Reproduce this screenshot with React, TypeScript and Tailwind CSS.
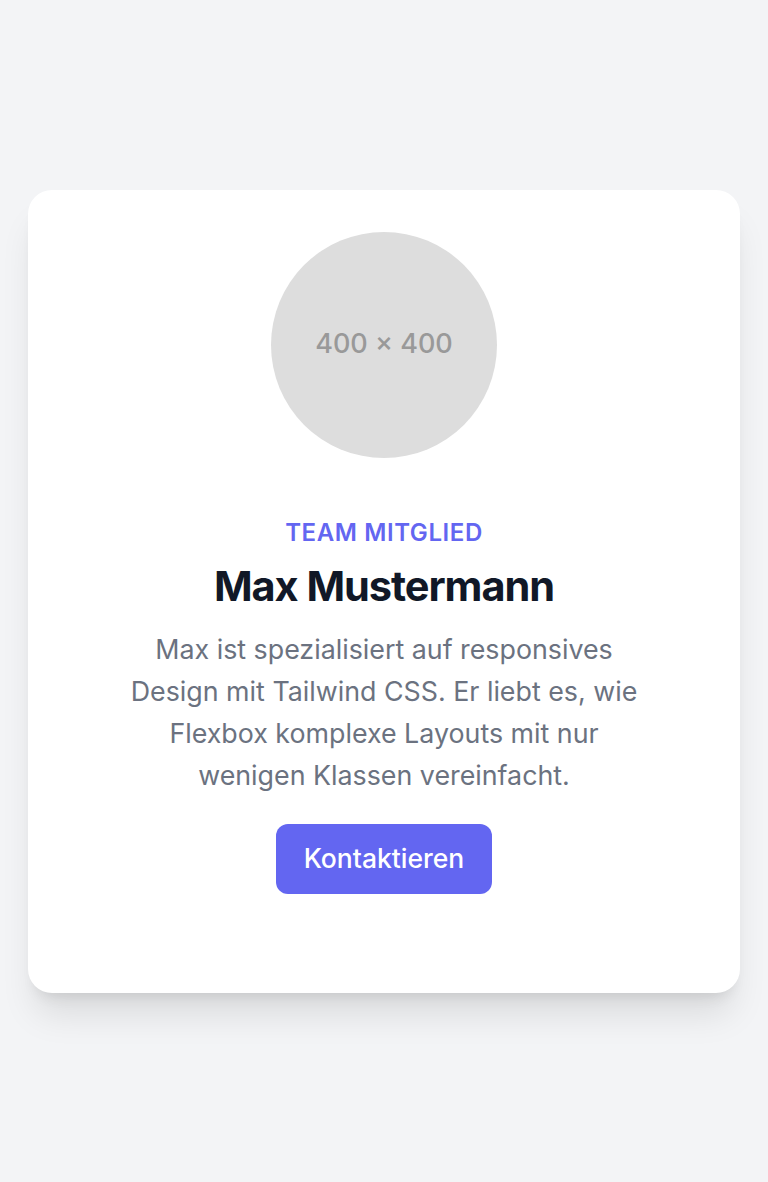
export default function App() {
  return (
    <div className="min-h-screen w-full bg-[#f3f4f6] flex items-center justify-center px-7 font-['Inter',sans-serif]">
      <div className="w-full bg-white rounded-3xl shadow-[0_28px_35px_-7px_rgba(0,0,0,0.1),0_11px_14px_-8px_rgba(0,0,0,0.1)] flex flex-col items-center pt-[42px] pb-[99px]">
        {/* Avatar placeholder */}
        <div className="w-[226px] h-[226px] rounded-full bg-[#dddddd] flex items-center justify-center">
          <span className="text-[27px] text-[#999999] font-medium">400 × 400</span>
        </div>

        <p className="mt-[59px] text-[24px] leading-[32px] font-semibold tracking-wide uppercase text-[#6366f1]">
          Team Mitglied
        </p>
        <h2 className="mt-[12px] text-[41.5px] leading-[50px] font-bold tracking-tight text-[#111827]">
          Max Mustermann
        </h2>
        <p className="mt-[17px] max-w-[525px] text-center text-[26.8px] leading-[42px] text-[#6b7280]">
          Max ist spezialisiert auf responsives Design mit Tailwind CSS. Er liebt es, wie Flexbox komplexe Layouts mit nur wenigen Klassen vereinfacht.
        </p>

        <button className="mt-[28px] w-[216px] h-[70px] rounded-xl bg-[#6366f1] text-white text-[26.5px] font-medium">
          Kontaktieren
        </button>
      </div>
    </div>
  );
}
